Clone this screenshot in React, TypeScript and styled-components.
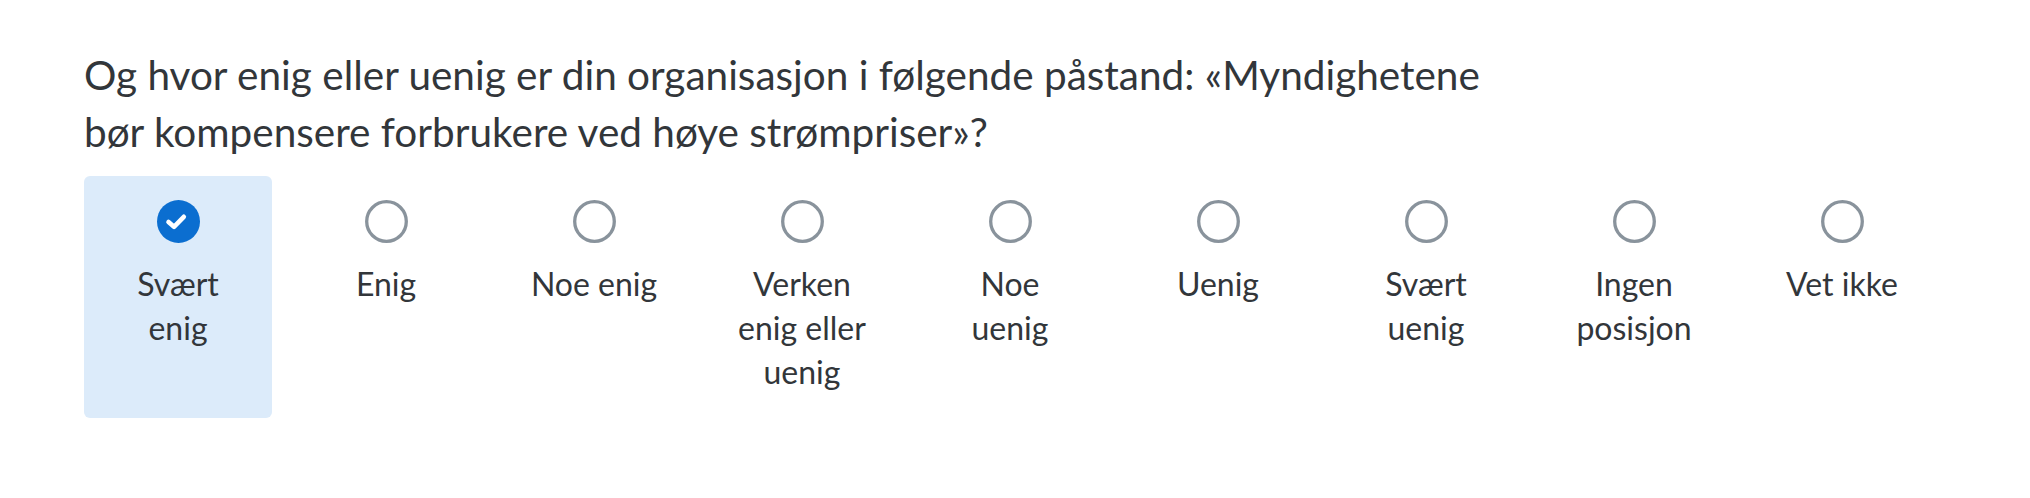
import React, { useState } from "react";
import styled, { createGlobalStyle } from "styled-components";

const GlobalStyle = createGlobalStyle`
  html, body {
    margin: 0;
    padding: 0;
    background: #ffffff;
  }
  body {
    font-family: Lato, "Noto Sans", "Liberation Sans", sans-serif;
    color: #32363a;
  }
`;

const Page = styled.div`
  padding: 46px 0 0 84px;
`;

const Question = styled.h2`
  margin: 0;
  max-width: 1440px;
  font-size: 40.5px;
  font-weight: 400;
  line-height: 57px;
  color: #32363a;
`;

const Choices = styled.div`
  display: flex;
  gap: 20px;
  margin-top: 16px;
`;

const Choice = styled.label<{ $selected: boolean }>`
  width: 188px;
  box-sizing: border-box;
  padding: 24px 26px;
  display: flex;
  flex-direction: column;
  align-items: center;
  gap: 19px;
  border-radius: 6px;
  background: ${(p) => (p.$selected ? "#dcebfa" : "transparent")};
  cursor: pointer;
`;

const Radio = styled.span`
  width: 43px;
  height: 43px;
  flex: none;
  display: flex;
  align-items: center;
  justify-content: center;
`;

const Label = styled.span`
  font-size: 32px;
  line-height: 44px;
  text-align: center;
  color: #32363a;
`;

const options = [
  "Svært enig",
  "Enig",
  "Noe enig",
  "Verken enig eller uenig",
  "Noe uenig",
  "Uenig",
  "Svært uenig",
  "Ingen posisjon",
  "Vet ikke",
];

const RadioIcon = ({ checked }: { checked: boolean }) =>
  checked ? (
    <svg width="43" height="43" viewBox="0 0 43 43">
      <circle cx="21.5" cy="21.5" r="21.5" fill="#0b6ed0" />
      <path
        d="M11.5 22l5.5 4.8 9.8-10"
        fill="none"
        stroke="#ffffff"
        strokeWidth="4.6"
        strokeLinecap="round"
        strokeLinejoin="round"
      />
    </svg>
  ) : (
    <svg width="43" height="43" viewBox="0 0 43 43">
      <circle cx="21.5" cy="21.5" r="19.8" fill="#ffffff" stroke="#89939c" strokeWidth="3.3" />
    </svg>
  );

export default function App() {
  const [selected, setSelected] = useState(0);
  return (
    <>
      <GlobalStyle />
      <Page>
        <Question>
          Og hvor enig eller uenig er din organisasjon i følgende påstand: «Myndighetene bør kompensere forbrukere ved høye strømpriser»?
        </Question>
        <Choices>
          {options.map((o, i) => (
            <Choice key={o} $selected={i === selected} onClick={() => setSelected(i)}>
              <Radio>
                <RadioIcon checked={i === selected} />
              </Radio>
              <Label>{o}</Label>
            </Choice>
          ))}
        </Choices>
      </Page>
    </>
  );
}
